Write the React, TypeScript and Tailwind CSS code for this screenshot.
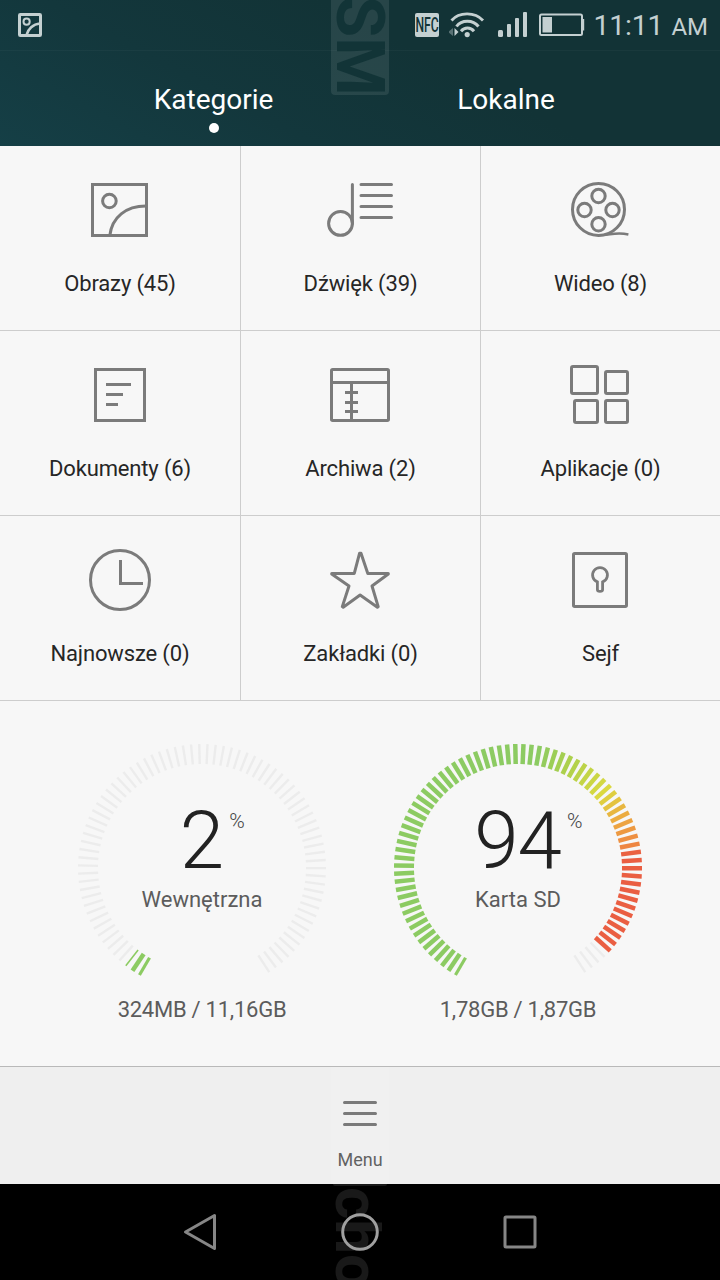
import type { ReactNode } from 'react'
import clsx from 'clsx'

const ICON_STROKE = '#7b7b7b'

function CategoryIcon({ children }: { children: ReactNode }) {
  return (
    <svg width="80" height="80" viewBox="0 0 80 80" fill="none" stroke={ICON_STROKE} strokeWidth="3">
      {children}
    </svg>
  )
}

const categories = [
  {
    label: 'Obrazy (45)',
    icon: (
      <>
        <rect x="12.5" y="14.5" width="54" height="51" />
        <circle cx="29.4" cy="31" r="6.8" />
        <path d="M29.8 65.5C32 47 46 36 66 36" />
      </>
    ),
  },
  {
    label: 'Dźwięk (39)',
    icon: (
      <g strokeLinecap="round">
        <circle cx="20.5" cy="53.4" r="11.9" />
        <path d="M32.4 14.5V53.4M41 14.5H71.5M41 25.5H71.5M41 36.5H71.5M41 47.5H71.5" />
      </g>
    ),
  },
  {
    label: 'Wideo (8)',
    icon: (
      <>
        <circle cx="38.5" cy="39.4" r="26" />
        <circle cx="38.5" cy="26" r="6.7" />
        <circle cx="24.5" cy="40" r="6.7" />
        <circle cx="52.5" cy="40" r="6.7" />
        <circle cx="38.5" cy="54.2" r="6.7" />
        <path d="M38.5 65.4C50 65.6 55 61.5 68.4 64.5" strokeWidth="2.4" />
      </>
    ),
  },
  {
    label: 'Dokumenty (6)',
    icon: (
      <>
        <rect x="15.5" y="14.5" width="49" height="51" />
        <path d="M26 29.5H51M26 39.5H43M26 49.5H38" />
      </>
    ),
  },
  {
    label: 'Archiwa (2)',
    icon: (
      <>
        <rect x="11.5" y="14.5" width="57" height="51" rx="1.2" />
        <path d="M11.5 27.5H68.5M31.5 27.5V65.5M25 37.5H38M25 47.5H38M25 56.5H38" />
      </>
    ),
  },
  {
    label: 'Aplikacje (0)',
    icon: (
      <>
        <rect x="11.5" y="11.5" width="26" height="27" rx="1.5" />
        <rect x="45.5" y="16.5" width="22" height="22" rx="1.5" />
        <rect x="14.5" y="45.5" width="23" height="22" rx="1.5" />
        <rect x="45.5" y="45.5" width="22" height="22" rx="1.5" />
      </>
    ),
  },
  {
    label: 'Najnowsze (0)',
    icon: (
      <>
        <circle cx="40" cy="40" r="29.5" />
        <path d="M40.5 20V43.5H63" />
      </>
    ),
  },
  {
    label: 'Zakładki (0)',
    icon: (
      <path
        d="M39.6 13.2L34.3 33.4H11.7V34L29 46L22.3 66.6L23.2 67.2L40.1 55L57.4 67.2L58.2 66.6L52 46L68.3 34V33.4H47.8L41 13.2Z"
        strokeLinejoin="round"
      />
    ),
  },
  {
    label: 'Sejf',
    icon: (
      <>
        <rect x="13.5" y="13.5" width="53" height="53" rx="1.2" />
        <path d="M37.4 41.9A7.4 7.4 0 1 1 42.6 41.9V49.4Q42.6 51.3 40 51.3Q37.4 51.3 37.4 49.4Z" strokeWidth="2.8" />
      </>
    ),
  },
]

const TICKS = 79
const START = 30.3
const STEP = 3.806

// colour stops along the dial, by tick index
const stops: [number, number[]][] = [
  [42, [140, 203, 98]],
  [46, [172, 208, 76]],
  [52, [219, 217, 64]],
  [56, [236, 172, 64]],
  [60, [238, 134, 66]],
  [61, [234, 98, 66]],
]

function tickColor(i: number) {
  if (i <= stops[0][0]) return `rgb(${stops[0][1].join(',')})`
  for (let s = 1; s < stops.length; s++) {
    const [to, b] = stops[s]
    const [from, a] = stops[s - 1]
    if (i <= to) {
      const t = (i - from) / (to - from)
      return `rgb(${a.map((v, k) => Math.round(v + (b[k] - v) * t)).join(',')})`
    }
  }
  return 'rgb(234,94,66)'
}

type GaugeProps = {
  percent: number
  name: string
  usage: string
  filled: number
  lastWidth?: number
}

function Gauge({ percent, name, usage, filled, lastWidth = 4.5 }: GaugeProps) {
  return (
    <div className="flex w-[248px] flex-col items-center">
      <div className="grid h-[248px] w-[248px]">
        <svg className="col-start-1 row-start-1" width="248" height="248" viewBox="-124 -124 248 248">
          {Array.from({ length: TICKS }, (_, i) => {
            const on = i < filled
            const width = i === 0 ? 3.2 : i === filled - 1 ? lastWidth : 4.5
            return (
              <line
                key={i}
                y1="104"
                y2="124"
                stroke={on ? tickColor(i) : '#ececec'}
                strokeWidth={on ? width : 2.4}
                transform={`rotate(${START + i * STEP})`}
              />
            )
          })}
        </svg>
        <div className="col-start-1 row-start-1 flex flex-col items-center pt-[50px]">
          <div className="flex pl-[23px]">
            <span className="text-[80px] font-light leading-[94px] tracking-[-1px] text-[#222]">{percent}</span>
            <span className="ml-1.5 mt-[15px] w-[18px] text-[21px] leading-6 text-[#444] font-light">%</span>
          </div>
          <span className="-mt-px text-[22px] leading-[26px] text-[#5c5c5c]">{name}</span>
        </div>
      </div>
      <p className="mt-[5px] whitespace-nowrap text-[22px] leading-[26px] tracking-[-0.25px] text-[#5c5c5c]">{usage}</p>
    </div>
  )
}

function StatusBar() {
  return (
    <div className="flex h-[51px] items-center justify-between border-b border-white/3 pl-[18px] pr-3 text-[#c4d0d1]">
      <svg width="24" height="24" viewBox="0 0 24 24" fill="none" stroke="currentColor" strokeWidth="2.6">
        <rect x="1.5" y="1.5" width="21" height="21" rx="0.8" strokeWidth="3" />
        <circle cx="8.6" cy="8.7" r="3.1" strokeWidth="2" />
        <path d="M8.5 22C10 16 15 11 22 10.5" />
      </svg>
      <div className="flex items-center">
        <div className="flex h-6 w-6 items-center justify-center rounded-[2px] bg-[#c4d0d1]">
          <span className="scale-x-[0.58] text-[21px] font-medium leading-6 text-[#123336]">NFC</span>
        </div>
        <svg className="ml-2.5" width="38" height="28" viewBox="0 0 38 28" fill="none" stroke="currentColor" strokeWidth="3">
          <path d="M2.5 9.5C10 .7 26 .7 34 9.5" strokeWidth="2.8" />
          <path d="M7.5 15.5C12.5 8.5 24 8.5 29.5 15.5" />
          <path d="M12 20.2C15.5 16 21.5 16 25 20.2" />
          <circle cx="18.2" cy="23.6" r="2.6" fill="currentColor" stroke="none" />
          <path d="M4 17V25L-1 21Z" fill="currentColor" stroke="none" opacity=".4" />
          <path d="M5.5 17V25L9.5 21Z" fill="currentColor" stroke="none" />
        </svg>
        <svg className="ml-[11px]" width="30" height="26" viewBox="0 0 30 26" fill="currentColor">
          <rect x="0" y="18" width="5" height="7" rx="1.5" />
          <rect x="9" y="12" width="4" height="13" rx="1" />
          <rect x="17" y="6" width="4" height="19" rx="1" />
          <rect x="25" y="0" width="4" height="25" rx="1" />
        </svg>
        <svg className="ml-[11px]" width="46" height="24" viewBox="0 0 46 24" fill="none" stroke="currentColor" strokeWidth="2">
          <rect x="1" y="1.5" width="42" height="20.5" rx="1.5" />
          <rect x="3.5" y="4" width="9.5" height="15.5" fill="currentColor" stroke="none" />
          <path d="M44.3 6V17.5" strokeWidth="1.8" />
        </svg>
        <span className="ml-2 pt-0.5 text-[28.5px] leading-[34px] tracking-[-0.2px]">11:11</span>
        <span className="ml-2 pt-1 text-[24px] leading-[34px]">AM</span>
      </div>
    </div>
  )
}

function Header() {
  return (
    <header className="h-[146px] bg-[linear-gradient(28deg,#153f46_0%,#13373c_32%,#123336_60%,#123336_100%)]">
      <StatusBar />
      <nav className="flex justify-center gap-[52px] pt-8 text-[28px] leading-[34px] text-white">
        <div className="flex w-[240px] flex-col items-center">
          <span className="-ml-px">Kategorie</span>
          <i className="mt-1.5 h-[10px] w-[10px] rounded-full bg-white" />
        </div>
        <div className="flex w-[240px] flex-col items-center">
          <span>Lokalne</span>
        </div>
      </nav>
    </header>
  )
}

function Watermark() {
  return (
    <>
      <div className="pointer-events-none absolute left-[331px] top-0 h-[95px] w-[58px] overflow-hidden rounded-b-[4px] bg-white/9">
        <span className="absolute -bottom-px left-0 text-[67px] font-bold leading-[58px] text-[#123437] [writing-mode:vertical-rl]">
          SM
        </span>
      </div>
      <div className="pointer-events-none absolute left-[331px] top-[1067px] h-[117px] w-[58px] bg-white/8" />
      <div className="pointer-events-none absolute left-[333px] top-[1184px] h-[2px] w-[54px] rounded-b bg-[#191919]" />
      <div className="pointer-events-none absolute left-[327px] top-[1187px] h-[93px] w-[60px] overflow-hidden">
        <span className="absolute left-0 top-0 text-[62px] font-bold leading-[60px] text-[#191919] [writing-mode:vertical-rl]">
          cho
        </span>
      </div>
    </>
  )
}

export default function App() {
  return (
    <div className="relative flex h-[1280px] w-[720px] flex-col overflow-hidden bg-[#f7f7f7] font-[Roboto,sans-serif]">
      <Header />

      <main className="grid grid-cols-3">
        {categories.map((category, i) => (
          <div
            key={category.label}
            className={clsx(
              'flex h-[185px] flex-col items-center border-b border-[#cdcdcd] pt-6',
              i % 3 !== 0 && 'border-l'
            )}
          >
            <div className={clsx('h-20 w-20', i % 3 !== 0 && '-ml-px')}>
              <CategoryIcon>{category.icon}</CategoryIcon>
            </div>
            <span className="mt-[21px] text-[22px] leading-[26px] tracking-[-0.15px] text-[#262626]">
              {category.label}
            </span>
          </div>
        ))}
      </main>

      <section className="flex h-[365px] gap-[68px] pl-[78px] pt-[43px]">
        <Gauge percent={2} name="Wewnętrzna" usage="324MB / 11,16GB" filled={3} lastWidth={1.6} />
        <Gauge percent={94} name="Karta SD" usage="1,78GB / 1,87GB" filled={75} />
      </section>

      <footer className="flex h-[118px] flex-col items-center border-t border-[#b9b9b9] bg-[#efefef]">
        <svg className="mt-[33px]" width="36" height="28" viewBox="0 0 36 28" stroke="#6f6f6f" strokeWidth="3" strokeLinecap="round">
          <path d="M2.5 2.5H33.5M2.5 13.5H33.5M2.5 24.5H33.5" />
        </svg>
        <span className="mt-5 text-[18px] leading-6 text-[#555]">Menu</span>
      </footer>

      <div className="flex flex-1 items-center justify-center bg-black">
        <svg className="relative z-10" width="360" height="48" viewBox="0 0 360 48" fill="none" stroke="#868686" strokeWidth="3" strokeLinejoin="round">
          <path d="M34.5 7.5V40.5L5.5 24Z" />
          <circle cx="180" cy="24" r="17.3" stroke="#a0a0a0" />
          <rect x="325" y="9" width="30" height="30" rx="1" />
        </svg>
      </div>

      <Watermark />
    </div>
  )
}
